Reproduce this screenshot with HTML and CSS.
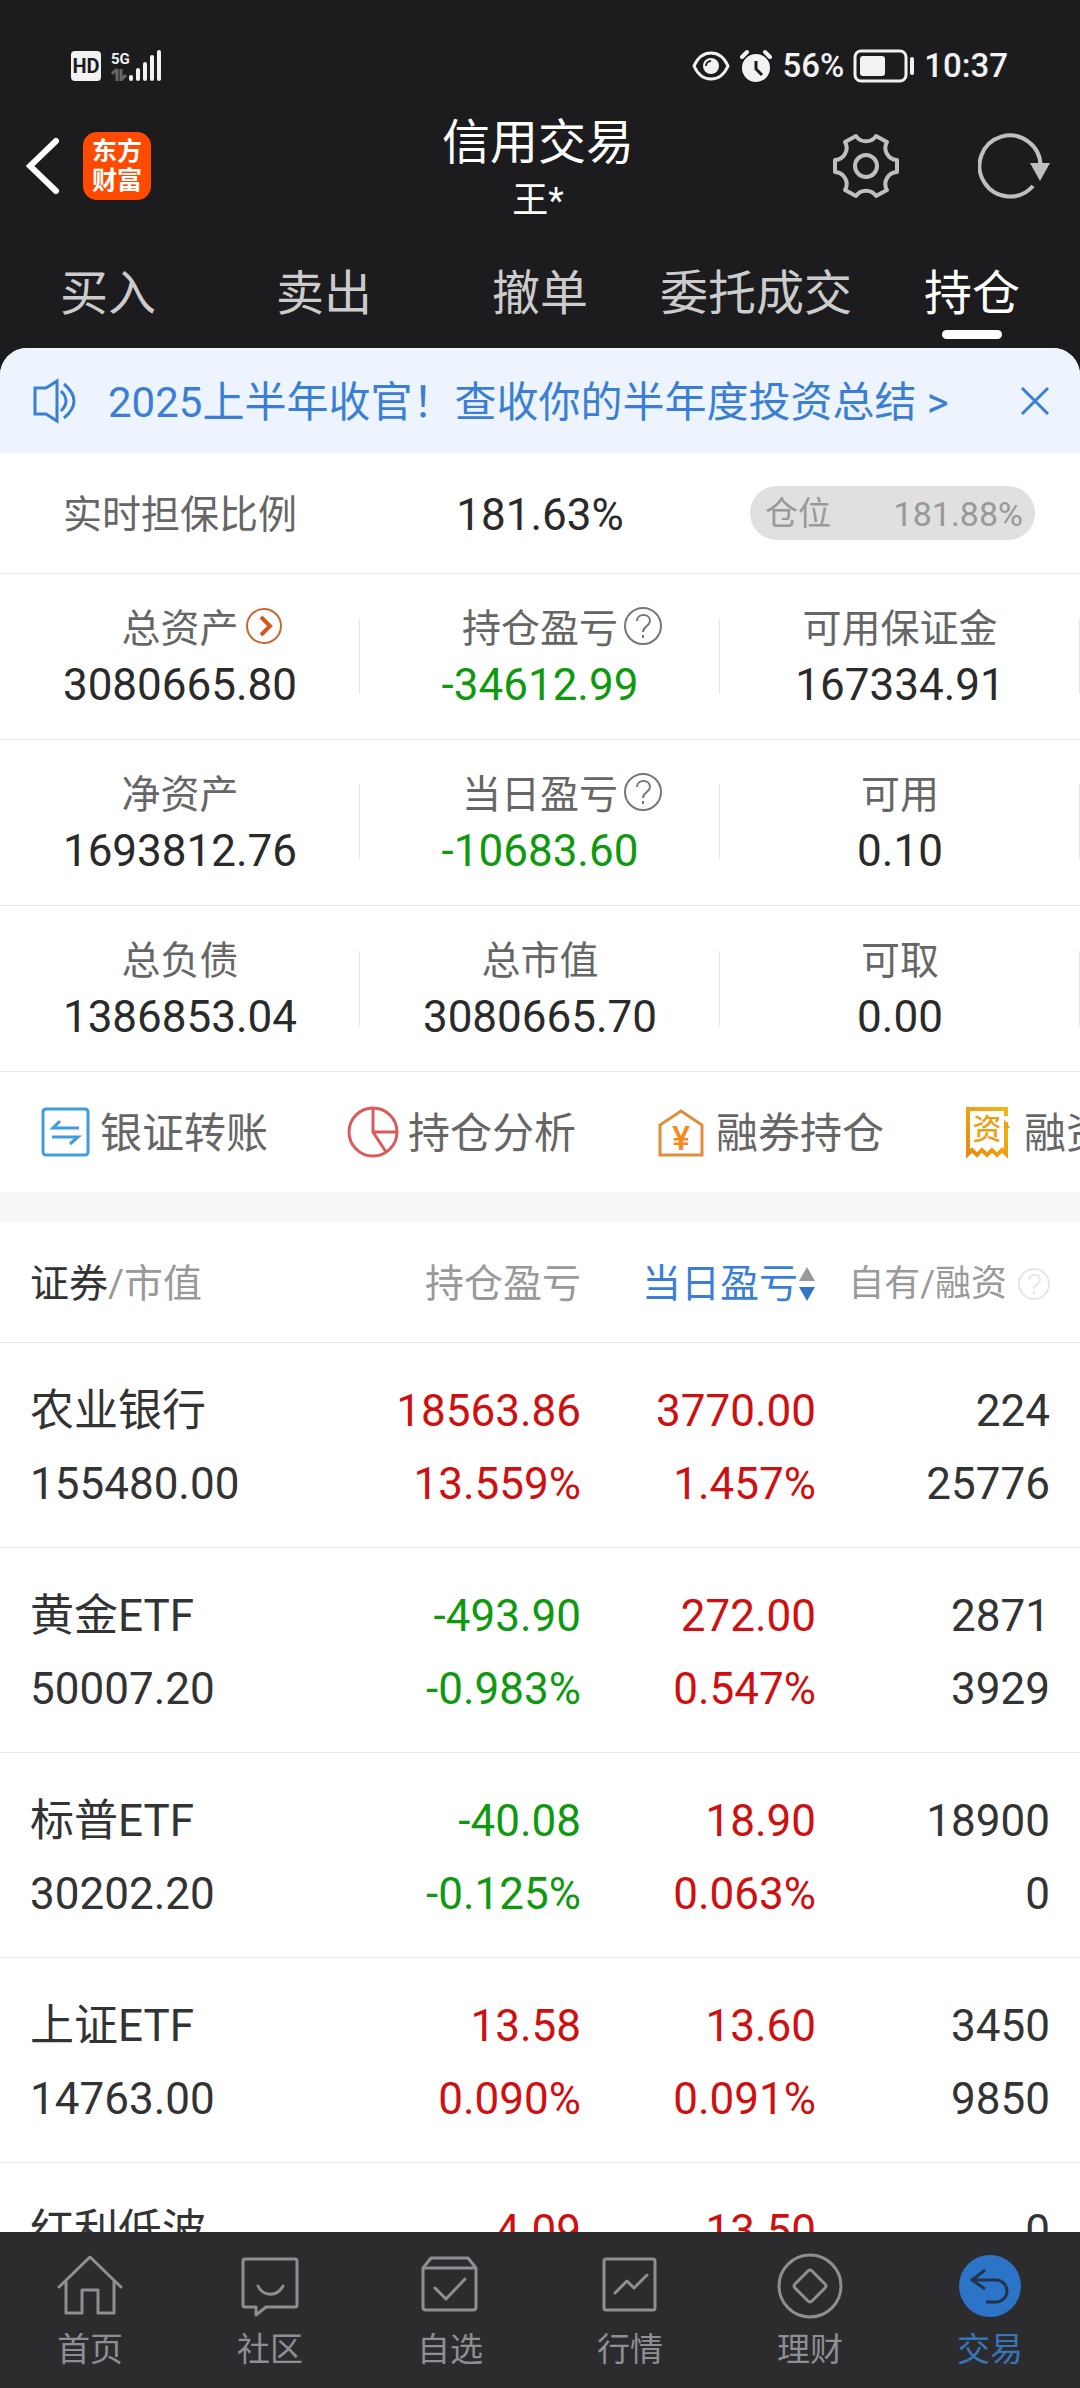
FILE: index.html
```html
<!DOCTYPE html>
<html lang="zh-CN">
<head>
<meta charset="utf-8">
<meta name="viewport" content="width=device-width, initial-scale=1">
<title>信用交易</title>
<link rel="stylesheet" href="styles.css">
</head>
<body>
<div class="app">
  <header class="top">
    <div class="status">
      <div class="status-group">
        <svg class="ico" width="92" height="34" viewBox="0 0 92 34" aria-hidden="true">
          <rect x="1" y="2" width="30" height="30" rx="4" fill="#f2f2f2"/>
          <text class="svg-hd" x="16" y="24" text-anchor="middle">HD</text>
          <text class="svg-5g" x="41" y="15">5G</text>
          <path d="M47 20v12M42 25l5-5M51 20v12M51 31l5-5" stroke="#666" stroke-width="3" fill="none"/>
          <path d="M61 28v2M68 21v9M75 15v15M82 8v22M89 3v27" stroke="#f2f2f2" stroke-width="4" stroke-linecap="round"/>
        </svg>
      </div>
      <div class="status-group status-right">
        <svg class="ico" width="38" height="32" viewBox="0 0 38 32" aria-hidden="true">
          <path d="M2 16C6 7 12 3 19 3s13 4 17 13c-4 9-10 13-17 13S6 25 2 16z" fill="none" stroke="#f2f2f2" stroke-width="3"/>
          <circle cx="19" cy="16" r="8" fill="#f2f2f2"/>
          <path d="M14 16a5 5 0 0 1 5-5" fill="none" stroke="#1c1c1e" stroke-width="2"/>
        </svg>
        <svg class="ico" width="34" height="34" viewBox="0 0 34 34" aria-hidden="true">
          <circle cx="17" cy="19" r="14" fill="#f2f2f2"/>
          <path d="M3 8l5-5M31 8l-5-5" stroke="#f2f2f2" stroke-width="4" stroke-linecap="round"/>
          <path d="M17 12v8l6 6" fill="none" stroke="#1c1c1e" stroke-width="3"/>
        </svg>
        <span>56%</span>
        <svg class="ico" width="62" height="34" viewBox="0 0 62 34" aria-hidden="true">
          <rect x="2" y="2" width="51" height="30" rx="6" fill="none" stroke="#f2f2f2" stroke-width="3"/>
          <rect x="7" y="7" width="25" height="20" rx="3" fill="#f2f2f2"/>
          <path d="M59 10v14" stroke="#f2f2f2" stroke-width="4" stroke-linecap="round"/>
        </svg>
        <span>10:37</span>
      </div>
    </div>

    <div class="navbar">
      <div class="nav-left">
        <button class="icon-btn" type="button" aria-label="返回">
          <svg class="ico" width="34" height="58" viewBox="0 0 34 58"><path d="M30 4L4 29l26 25" fill="none" stroke="#fff" stroke-width="6" stroke-linecap="round"/></svg>
        </button>
        <div class="logo"><span>东方</span><span>财富</span></div>
      </div>
      <div class="nav-title">
        <h1>信用交易</h1>
        <p>王*</p>
      </div>
      <div class="nav-right">
        <button class="icon-btn" type="button" aria-label="设置">
          <svg class="ico" width="68" height="68" viewBox="-1 -1 68 68" fill="none" stroke="#bfbfbf" stroke-width="4" stroke-linejoin="round">
            <path d="M2 27A12 12 0 0 0 12 9L23 3A12 12 0 0 0 43 3L54 9A12 12 0 0 0 64 27V39A12 12 0 0 0 54 57L43 63A12 12 0 0 0 23 63L12 57A12 12 0 0 0 2 39Z"/>
            <circle cx="33" cy="33" r="11"/>
          </svg>
        </button>
        <button class="icon-btn" type="button" aria-label="刷新">
          <svg class="ico" width="72" height="68" viewBox="0 0 72 68">
            <path d="M55 54A30.500 30.500 0 1 1 62.500 34" fill="none" stroke="#bfbfbf" stroke-width="4"/>
            <path d="M52 31h20L62 49z" fill="#bfbfbf"/>
          </svg>
        </button>
      </div>
    </div>

    <nav class="tabs">
      <a href="#buy">买入</a>
      <a href="#sell">卖出</a>
      <a href="#cancel">撤单</a>
      <a href="#orders">委托成交</a>
      <a href="#holdings" class="active" aria-current="page">持仓</a>
    </nav>
  </header>

  <main class="sheet">
    <div class="banner">
      <svg class="ico" width="44" height="46" viewBox="0 0 44 46" fill="none" stroke="#3a7fd5" stroke-width="3" aria-hidden="true">
        <path d="M2 10h11l11-7v40l-11-7H2z"/>
        <path d="M28 13q10 10 0 20M31 6q20 17 0 34"/>
      </svg>
      <a class="banner-text" href="#report">2025上半年收官！查收你的半年度投资总结 &gt;</a>
      <button class="icon-btn" type="button" aria-label="关闭">
        <svg class="ico" width="30" height="30" viewBox="0 0 30 30"><path d="M2 2l26 26M28 2L2 28" stroke="#3a7fd5" stroke-width="3"/></svg>
      </button>
    </div>

    <section class="ratio">
      <span class="label">实时担保比例</span>
      <span class="value">181.63%</span>
      <div class="pill"><span>仓位</span><span class="pill-value">181.88%</span></div>
    </section>

    <dl class="stats">
      <div class="stat">
        <dt>总资产<svg class="stat-icon" width="38" height="38" viewBox="0 0 38 38" fill="none"><circle cx="19" cy="19" r="17" stroke="#c8692f" stroke-width="2"/><path d="M16 10l9 9-9 9" stroke="#d2571a" stroke-width="4"/></svg></dt>
        <dd>3080665.80</dd>
      </div>
      <div class="stat">
        <dt>持仓盈亏<svg class="stat-icon" width="38" height="38" viewBox="0 0 38 38" fill="none" stroke="#777" stroke-width="2"><circle cx="19" cy="19" r="18"/><path d="M13 14c0-8 13-8 13 0 0 5-7 5-7 11M19 28v3"/></svg></dt>
        <dd class="down">-34612.99</dd>
      </div>
      <div class="stat"><dt>可用保证金</dt><dd>167334.91</dd></div>
      <div class="stat"><dt>净资产</dt><dd>1693812.76</dd></div>
      <div class="stat">
        <dt>当日盈亏<svg class="stat-icon" width="38" height="38" viewBox="0 0 38 38" fill="none" stroke="#777" stroke-width="2"><circle cx="19" cy="19" r="18"/><path d="M13 14c0-8 13-8 13 0 0 5-7 5-7 11M19 28v3"/></svg></dt>
        <dd class="down">-10683.60</dd>
      </div>
      <div class="stat"><dt>可用</dt><dd>0.10</dd></div>
      <div class="stat"><dt>总负债</dt><dd>1386853.04</dd></div>
      <div class="stat"><dt>总市值</dt><dd>3080665.70</dd></div>
      <div class="stat"><dt>可取</dt><dd>0.00</dd></div>
    </dl>

    <nav class="quick">
      <a href="#transfer">
        <svg class="ico" width="54" height="54" viewBox="0 0 54 54" fill="none" stroke="#3d9ddf" stroke-width="3">
          <rect x="5" y="4" width="45" height="46" rx="3"/>
          <path d="M41 23H15l7-7M14 32h26l-8 7"/>
        </svg><span>银证转账</span></a>
      <a href="#analysis">
        <svg class="ico" width="54" height="54" viewBox="0 0 54 54" fill="none" stroke="#dc5a5a" stroke-width="3">
          <circle cx="27" cy="27" r="24"/><path d="M27 3v24h24M27 27l13 20"/>
        </svg><span>持仓分析</span></a>
      <a href="#short">
        <svg class="ico" width="54" height="54" viewBox="0 0 54 54">
          <path d="M6 50V20L27 6l21 14v30z" fill="none" stroke="#e08d3c" stroke-width="3"/>
          <text class="svg-yen" x="27" y="45" text-anchor="middle">¥</text>
        </svg><span>融券持仓</span></a>
      <a href="#margin">
        <svg class="ico" width="54" height="54" viewBox="0 0 54 54">
          <defs><linearGradient id="gold" x1="0" y1="1" x2="1" y2="0"><stop offset="0" stop-color="#e58a14"/><stop offset="1" stop-color="#f3b814"/></linearGradient></defs>
          <path d="M44 11V4H6v45l4-4 5 5 5-5 5 5 5-5 5 5 5-5 4 4V17" fill="none" stroke="url(#gold)" stroke-width="4"/>
          <path d="M42 14l6 9h-6z" fill="#eca016"/>
          <text class="svg-zi" x="25" y="35" text-anchor="middle">资</text>
        </svg><span>融资持仓</span></a>
    </nav>

    <section class="holdings">
      <table>
        <colgroup><col><col class="c-num"><col class="c-num"><col class="c-last"></colgroup>
        <thead>
          <tr>
            <th scope="col"><b>证券</b>/市值</th>
            <th scope="col">持仓盈亏</th>
            <th scope="col"><button class="sort" type="button">当日盈亏<svg class="ico" width="18" height="36" viewBox="0 0 18 36"><path d="M1 15L9 1l8 14z" fill="#999"/><path d="M1 21h16L9 35z" fill="#3375c6"/></svg></button></th>
            <th scope="col"><div class="own"><span>自有/融资</span><svg class="ico" width="32" height="32" viewBox="0 0 32 32" fill="none" stroke="#e6e6e6" stroke-width="2"><circle cx="16" cy="16" r="15"/><path d="M11 12c0-7 11-7 11 0 0 4-6 4-6 9M16 23v3"/></svg></div></th>
          </tr>
        </thead>
        <tbody>
          <tr><td>农业银行<br>155480.00</td><td class="up">18563.86<br>13.559%</td><td class="up">3770.00<br>1.457%</td><td>224<br>25776</td></tr>
          <tr><td>黄金ETF<br>50007.20</td><td class="down">-493.90<br>-0.983%</td><td class="up">272.00<br>0.547%</td><td>2871<br>3929</td></tr>
          <tr><td>标普ETF<br>30202.20</td><td class="down">-40.08<br>-0.125%</td><td class="up">18.90<br>0.063%</td><td>18900<br>0</td></tr>
          <tr><td>上证ETF<br>14763.00</td><td class="up">13.58<br>0.090%</td><td class="up">13.60<br>0.091%</td><td>3450<br>9850</td></tr>
          <tr><td>红利低波</td><td class="up">4.09</td><td class="up">13.50</td><td>0</td></tr>
        </tbody>
      </table>
    </section>
  </main>

  <nav class="bottom">
    <a href="#home">
      <svg class="ico" width="66" height="66" viewBox="0 0 66 66" fill="none" stroke="#8e8e93" stroke-width="3" stroke-linejoin="round" stroke-linecap="round"><path d="M2 34L33 4l31 30M9 28v32h16V37h16v23h16V28"/></svg>
      <span>首页</span></a>
    <a href="#community">
      <svg class="ico" width="66" height="66" viewBox="0 0 66 66" fill="none" stroke="#8e8e93" stroke-width="3" stroke-linejoin="round" stroke-linecap="round"><path d="M8 6h50q2 0 2 2v44q0 2-2 2H29l-10 8v-8H8q-2 0-2-2V8q0-2 2-2z"/><path d="M21 33c5 11 19 11 25 0"/></svg>
      <span>社区</span></a>
    <a href="#watch">
      <svg class="ico" width="66" height="66" viewBox="0 0 66 66" fill="none" stroke="#8e8e93" stroke-width="3" stroke-linejoin="round" stroke-linecap="round"><path d="M6 15l8-10h37l8 10v39q0 3-3 3H9q-3 0-3-3zM6 15h53M18 35l11 11 19-20"/></svg>
      <span>自选</span></a>
    <a href="#market">
      <svg class="ico" width="66" height="66" viewBox="0 0 66 66" fill="none" stroke="#8e8e93" stroke-width="3" stroke-linejoin="round" stroke-linecap="round"><rect x="7" y="6" width="51" height="51" rx="2"/><path d="M18 40l12-12 7 7 13-13"/></svg>
      <span>行情</span></a>
    <a href="#wealth">
      <svg class="ico" width="66" height="66" viewBox="0 0 66 66" fill="none" stroke="#8e8e93" stroke-width="3" stroke-linejoin="round"><circle cx="33" cy="33" r="31"/><path d="M31 18q2-2 4 0l13 13q2 2 0 4L35 48q-2 2-4 0L18 35q-2-2 0-4z"/></svg>
      <span>理财</span></a>
    <a href="#trade" class="active" aria-current="page">
      <svg class="ico" width="66" height="66" viewBox="0 0 66 66" fill="none"><circle cx="33" cy="33" r="31" fill="#2b74c8"/><path d="M28 17L15 27l13 9M15 27h24a11 11 0 0 1 0 22H29" stroke="#23334b" stroke-width="3"/></svg>
      <span>交易</span></a>
  </nav>
</div>
</body>
</html>
```
FILE: styles.css
```css
* { box-sizing: border-box; }

body, h1, p, dl, dd { margin: 0; }

body {
  background: #1c1c1e;
  color: #2a2a2a;
  font-family: Roboto, "Noto Sans CJK SC", sans-serif;
  font-size: 44px;
  line-height: 56px;
}

a { color: inherit; text-decoration: none; }

button {
  padding: 0;
  border: 0;
  background: none;
  color: inherit;
  font: inherit;
}

.ico { display: block; flex: none; }
.icon-btn { flex: none; }

.app {
  display: flex;
  flex-direction: column;
  height: 100vh;
}

/* Status bar */
.status {
  display: flex;
  justify-content: space-between;
  align-items: center;
  padding: 48px 72px 0 70px;
  color: #f2f2f2;
  font-size: 33px;
  font-weight: 500;
  line-height: 36px;
}
.status-group { display: flex; align-items: center; gap: 9px; }
.svg-hd { font: 700 20px Roboto, sans-serif; fill: #1c1c1e; }
.svg-5g { font: 700 15px Roboto, sans-serif; fill: #f2f2f2; }

/* Title bar */
.navbar {
  display: grid;
  grid-template-columns: 1fr auto 1fr;
  align-items: center;
  height: 156px;
  padding: 8px 30px 0 26px;
  color: #fff;
}
.nav-left { display: flex; align-items: center; gap: 23px; }
.nav-right { display: flex; align-items: center; justify-content: flex-end; gap: 78px; }
.logo {
  display: flex;
  flex-direction: column;
  justify-content: center;
  align-items: center;
  width: 68px;
  height: 68px;
  border-radius: 14px;
  background: #ff4a00;
  font-size: 25px;
  font-weight: 700;
  line-height: 29px;
}
.nav-title { padding-top: 10px; text-align: center; }
.nav-title h1 { font-size: 48px; font-weight: 400; line-height: 60px; }
.nav-title p { font-size: 36px; line-height: 56px; }

/* Order tabs */
.tabs {
  display: grid;
  grid-template-columns: repeat(5, 1fr);
  height: 108px;
  color: #ccc;
  font-size: 48px;
  line-height: 108px;
  text-align: center;
  white-space: nowrap;
}
.tabs .active { position: relative; color: #fff; }
.tabs .active::after {
  content: "";
  position: absolute;
  left: 50%;
  bottom: 9px;
  width: 60px;
  height: 9px;
  margin-left: -30px;
  border-radius: 5px;
  background: #fff;
}

.sheet {
  display: flex;
  flex: 1;
  flex-direction: column;
  min-height: 0;
  overflow: hidden;
  border-radius: 27px 27px 0 0;
  background: #fff;
}

/* Announcement */
.banner {
  display: flex;
  flex: none;
  align-items: center;
  height: 105px;
  padding: 0 30px 0 33px;
  background: #edf4fd;
  color: #3a7fd5;
  font-size: 42px;
}
.banner-text { flex: 1; padding: 4px 0 0 31px; white-space: nowrap; }

/* Collateral ratio */
.ratio {
  display: grid;
  flex: none;
  grid-template-columns: repeat(3, 1fr);
  align-items: center;
  height: 121px;
  border-bottom: 1px solid #e8e8e8;
  text-align: center;
}
.label, .value { padding-top: 4px; }
.label { color: #666; font-size: 39px; }
.pill {
  display: flex;
  justify-content: space-between;
  align-items: center;
  height: 54px;
  margin: 0 45px 0 30px;
  padding: 2px 12px 0 15px;
  border-radius: 27px;
  background: #e0e0e0;
  color: #999;
  font-size: 33px;
}
.pill-value { font-size: 34px; }

/* Account figures */
.stats {
  display: grid;
  flex: none;
  grid-template-columns: repeat(3, 1fr);
  text-align: center;
}
.stat {
  position: relative;
  height: 166px;
  padding-top: 27px;
  border-bottom: 1px solid #e8e8e8;
}
.stat::after {
  content: "";
  position: absolute;
  top: 45px;
  right: 0;
  width: 1px;
  height: 75px;
  background: #e6e6e6;
}
.stat dt {
  position: relative;
  width: fit-content;
  margin: 0 auto;
  color: #666;
  font-size: 39px;
}
.stat-icon { position: absolute; top: 6px; left: 100%; margin-left: 6px; }

.up { color: #cf1010; }
.down { color: #0f990f; }

/* Shortcuts */
.quick {
  display: flex;
  flex: none;
  align-items: center;
  gap: 78px;
  height: 150px;
  padding-left: 38px;
  border-bottom: 30px solid #f6f8fa;
  overflow: hidden;
  color: #666;
  font-size: 42px;
  white-space: nowrap;
}
.quick a { display: flex; flex: none; align-items: center; gap: 8px; }
.quick span { padding-top: 4px; }
.svg-yen { font: 500 34px Roboto, sans-serif; fill: #f58a1f; }
.svg-zi { font: 500 29px "Noto Sans CJK SC", sans-serif; fill: #eca016; }

/* Holdings */
.holdings { flex: 1; min-height: 0; overflow: hidden; }
.holdings table {
  width: 100%;
  border-collapse: separate;
  border-spacing: 0;
  table-layout: fixed;
  color: #333;
}
.c-num { width: 235px; }
.c-last { width: 264px; }
.holdings th, .holdings td {
  padding: 0;
  border-bottom: 1px solid #e8e8e8;
  text-align: right;
  white-space: nowrap;
}
.holdings th { height: 121px; padding-top: 4px; color: #999; font-size: 39px; font-weight: 400; }
.holdings th b { color: #333; font-weight: 400; }
.holdings td { height: 205px; padding: 32px 0 24px; line-height: 73px; vertical-align: top; }
.holdings tr > :first-child { padding-left: 30px; text-align: left; }
.holdings tr > :last-child { padding-right: 30px; }
.sort { display: inline-flex; align-items: center; color: #3a7fd5; }
.own { display: flex; justify-content: flex-end; align-items: center; gap: 11px; font-size: 36px; }

/* Bottom navigation */
.bottom {
  display: grid;
  flex: none;
  grid-template-columns: repeat(6, 1fr);
  height: 156px;
  padding-top: 21px;
  background: #2c2c2e;
  color: #8e8e93;
  font-size: 33px;
  line-height: 62px;
}
.bottom a { display: flex; flex-direction: column; align-items: center; }
.bottom .active { color: #3a74b8; }
```
